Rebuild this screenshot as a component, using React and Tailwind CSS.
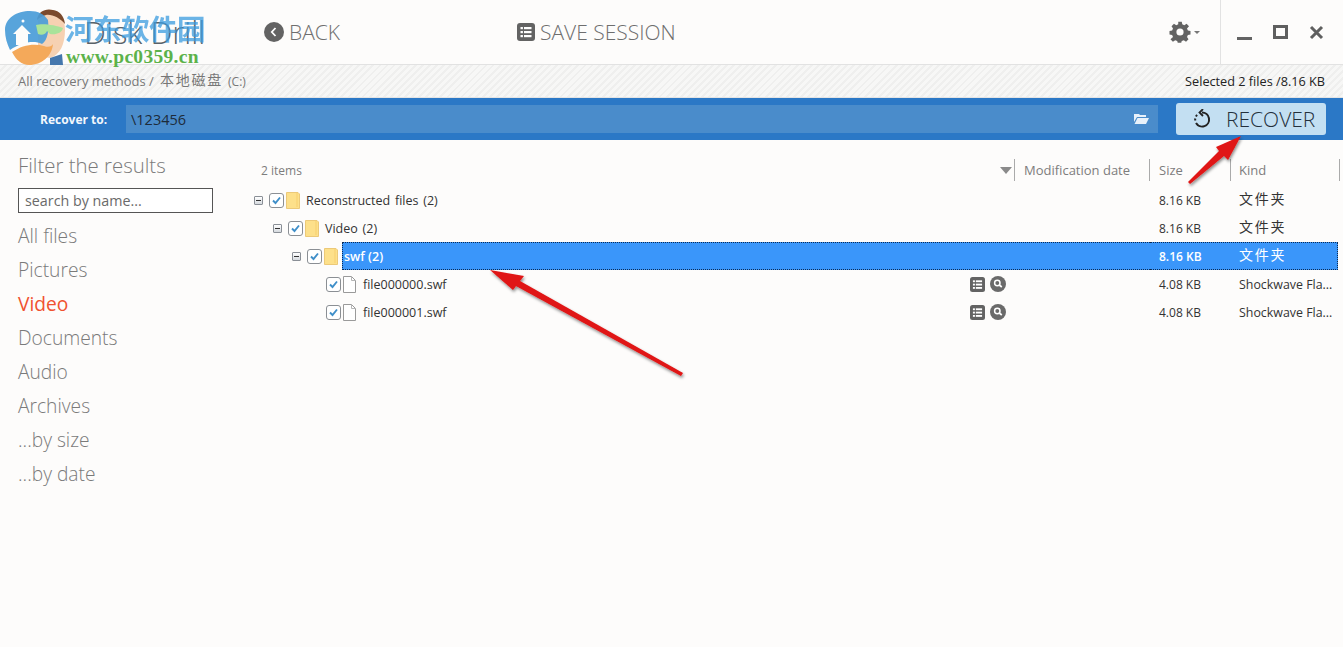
import React from "react";

function Minus() {
  return (
    <span className="w-[9px] h-[9px] border border-[#8a8f96] bg-[linear-gradient(#ffffff,#d5d9de)] flex items-center justify-center shrink-0 rounded-[1px]">
      <span className="w-[5px] h-px bg-[#333]" />
    </span>
  );
}

function Check() {
  return (
    <span className="w-[15px] h-[15px] border border-[#8b8f94] rounded-[3px] bg-white flex items-center justify-center shrink-0">
      <svg width="11" height="11" viewBox="0 0 11 11"><path d="M2 5.5 L4.5 8 L9 2.5" fill="none" stroke="#3f8fc9" strokeWidth="1.9" /></svg>
    </span>
  );
}

function Folder() {
  return (
    <svg width="14" height="17" viewBox="0 0 14 17" className="shrink-0">
      <path d="M0.5 0.5 H12 L13.5 2 V16.5 H0.5 Z" fill="#fde08a" stroke="#ecc978" strokeWidth="1" />
      <path d="M11 1 V15" stroke="#f6cf6e" strokeWidth="1" />
    </svg>
  );
}

function FileIcon() {
  return (
    <svg width="13" height="17" viewBox="0 0 13 17" className="shrink-0">
      <path d="M0.5 0.5 H8.5 L12.5 4.5 V16.5 H0.5 Z" fill="#fff" stroke="#9a9a9a" />
      <path d="M8.5 0.5 V4.5 H12.5" fill="none" stroke="#b5b5b5" />
    </svg>
  );
}

function ListSquare({ size = 15 }) {
  return (
    <svg width={size} height={size} viewBox="0 0 18 18" className="shrink-0">
      <rect width="18" height="18" rx="3" fill="#636363" />
      <g fill="#fff">
        <rect x="3.5" y="4" width="2.4" height="2.2" />
        <rect x="7" y="4" width="7.5" height="2.2" />
        <rect x="3.5" y="8" width="2.4" height="2.2" />
        <rect x="7" y="8" width="7.5" height="2.2" />
        <rect x="3.5" y="12" width="2.4" height="2.2" />
        <rect x="7" y="12" width="7.5" height="2.2" />
      </g>
    </svg>
  );
}

function SearchRound() {
  return (
    <svg width="16" height="16" viewBox="0 0 16 16" className="shrink-0">
      <circle cx="8" cy="8" r="8" fill="#6a6a6a" />
      <circle cx="7.3" cy="7" r="2.7" fill="none" stroke="#fff" strokeWidth="1.5" />
      <path d="M9.3 9 L11.8 11" stroke="#fff" strokeWidth="1.7" />
    </svg>
  );
}

function Row({ indent, minus, folder, name, size, kind, selected, tools }) {
  return (
    <div className={`h-[28px] flex items-center text-[12.5px] ${selected ? "text-white" : "text-[#333]"}`}>
      <div className="flex-1 flex items-center min-w-0 h-full" style={{ paddingLeft: indent }}>
        {minus && <span className="mr-[6px] flex"><Minus /></span>}
        <Check />
        <span className="ml-[2px] flex">{folder ? <Folder /> : <FileIcon />}</span>
        {selected ? (
          <span className="ml-[4px] flex-1 h-[28px] flex items-center pl-px pt-[2px] bg-[#3a96fa] border-y border-l border-dotted border-[#0c2c55] font-semibold">{name}</span>
        ) : (
          <span className={`pt-[2px] [word-spacing:1.5px] ${folder ? "ml-[6px]" : "ml-[7px]"}`}>{name}</span>
        )}
        {tools && (
          <span className="ml-auto mr-[144px] flex items-center gap-[5px]">
            <ListSquare />
            <SearchRound />
          </span>
        )}
      </div>
      <div className={`w-[188px] h-full flex items-center shrink-0 ${selected ? "bg-[#3a96fa] border-y border-r border-dotted border-[#0c2c55]" : ""}`}>
        <span className={`w-[80px] pl-[9px] pt-px text-[12px] ${selected ? "font-semibold" : ""}`}>{size}</span>
        <span className={`pl-[9px] whitespace-nowrap ${kind === "文件夹" ? "text-[14px] tracking-[1.7px] mt-[-3px]" : "pt-[2px] text-[12.4px]"}`}>{kind}</span>
      </div>
    </div>
  );
}

const nav = ["All files", "Pictures", "Video", "Documents", "Audio", "Archives", "...by size", "...by date"];

export default function App() {
  return (
    <div className="relative w-[1343px] h-[647px] overflow-hidden bg-[#fdfcfb] font-['Open_Sans','Noto_Sans_CJK_SC',sans-serif]">
      {/* Header */}
      <header className="h-[65px] flex items-center border-b border-[#e2e2e2] text-[#6e6e6e]">
        <span className="ml-[84px] w-[180px] text-[31px] leading-none font-light text-[#5a6268] pt-px">Disk Drill</span>
        <span className="flex items-center gap-[5px] text-[21px] font-light">
          <svg width="20" height="20" viewBox="0 0 20 20"><circle cx="10" cy="10" r="10" fill="#636363" /><path d="M11.5 6 L7.8 10 L11.5 14" fill="none" stroke="#fff" strokeWidth="1.8" /></svg>
          <span className="pt-[2px]">BACK</span>
        </span>
        <span className="ml-[177px] flex items-center gap-[5px] text-[21px] font-light">
          <ListSquare size={18} />
          <span className="pt-[2px]">SAVE SESSION</span>
        </span>
        <span className="ml-auto flex items-center gap-[2px] mr-[20px]">
          <svg width="24" height="24" viewBox="0 0 24 24" fill="#636363">
            <path fillRule="evenodd" d="M10 1h4l.6 3 2.3 1 2.6-1.7 2.8 2.8L20 8.700l1 2.300 3 .6v4l-3 .6-1 2.300 1.700 2.600-2.800 2.800-2.600-1.700-2.300 1-.6 1.800h-4l-.6-1.800-2.300-1-2.600 1.700-2.800-2.800L4 18.500l-1-2.300-3-.6v-4l3-.6 1-2.300-1.700-2.600 2.800-2.800 2.600 1.700 2.300-1z" transform="translate(1.500 0.800) scale(0.875)" />
            <circle cx="12" cy="12" r="3.600" fill="#fdfcfb" />
          </svg>
          <span className="w-0 h-0 border-x-[3px] border-x-transparent border-t-[3px] border-t-[#777]" />
        </span>
        <span className="w-px h-[65px] bg-[#e2e2e2]" />
        <span className="flex items-center ml-[16px] mr-[19px]">
          <span className="w-[15px] h-[3px] bg-[#636363] mt-[12px]" />
          <span className="ml-[21px] w-[15px] h-[14px] border-[3px] border-[#5f5f5f]" />
          <svg width="15" height="15" viewBox="0 0 15 15" className="ml-[21px]"><path d="M2 2 L13 13 M13 2 L2 13" stroke="#5f5f5f" strokeWidth="3" /></svg>
        </span>
      </header>

      {/* Breadcrumb */}
      <div className="h-[33px] flex items-center justify-between border-b border-[#e4e4e4] pl-[18px] pr-[18px] bg-[repeating-linear-gradient(135deg,#f7f7f6_0px,#f7f7f6_3px,#efefee_3px,#efefee_5px)]">
        <span className="flex items-center text-[13px] text-[#777]">
          <span className="pt-[2px]">All recovery methods /</span>
          <span className="ml-[6px] text-[14px] tracking-[1.8px] mt-[-3px]">本地磁盘</span>
          <span className="ml-[5px] text-[12px] pt-[2px]">(C:)</span>
        </span>
        <span className="text-[12.7px] text-[#222] pt-[2px]">Selected 2 files /8.16 KB</span>
      </div>

      {/* Recover bar */}
      <div className="h-[42px] flex items-center bg-[#2b78c6]">
        <span className="ml-[40px] w-[86px] text-[12px] font-bold text-[#f2f7fc] pt-[2px]">Recover to:</span>
        <div className="w-[1032px] h-[28px] flex items-center justify-between pl-[5px] pr-[9px] bg-[#4a8ccb] text-[14.5px] text-[#1d2b3a]">
          <span className="pt-px">\123456</span>
          <svg width="15" height="12" viewBox="0 0 15 12" fill="#e8f1fa"><path d="M0 2 V1 H5 L6 2 H12 V4 H3 L0 9 Z" /><path d="M3.500 5 H15 L12 11 H0.500 Z" /></svg>
        </div>
        <button className="ml-[18px] w-[150px] h-[32px] flex items-center rounded-[3px] bg-[#c3dff2] text-[#23303c] text-[21px] font-light">
          <svg width="20" height="20" viewBox="0 0 20 20" className="ml-[16px]" fill="none" stroke="#222" strokeWidth="2">
            <path d="M10 3.500 A7 7 0 1 1 4 14" />
            <path d="M3.200 11.500 A7 7 0 0 1 5.500 5.500" strokeDasharray="2 2" />
            <path d="M11 0 L7.500 3.500 L11 7" strokeWidth="1.800" />
          </svg>
          <span className="ml-[14px] pt-[2px]">RECOVER</span>
        </button>
      </div>

      {/* Body */}
      <div className="flex">
        <aside className="w-[245px] shrink-0 pl-[18px] pt-[11px] text-[#7a7a7a]">
          <div className="text-[20.4px] leading-[28px] font-light">Filter the results</div>
          <div className="mt-[9px] w-[195px] h-[25px] border border-[#555] bg-white flex items-center pl-[6px] pt-px text-[14.3px] text-[#6a6a6a]">search by name...</div>
          <nav className="mt-[6px]">
            {nav.map((n) => (
              <div key={n} className={`h-[34px] flex items-center pt-px text-[19.2px] font-light ${n === "Video" ? "text-[#f0522f] font-normal" : ""}`}>{n}</div>
            ))}
          </nav>
        </aside>
        <main className="flex-1 min-w-0 pr-[5px]">
          <div className="h-[46px] flex items-center pt-[14px] text-[13px] text-[#7d7d7d]">
            <span className="ml-[16px] text-[12px] pt-[2px]">2 items</span>
            <span className="ml-auto w-0 h-0 border-x-[6px] border-x-transparent border-t-[7px] border-t-[#8a8a8a]" />
            <span className="ml-[2px] w-px h-[22px] bg-[#aaa]" />
            <span className="w-[134px] pl-[9px] pt-[2px]">Modification date</span>
            <span className="w-px h-[22px] bg-[#aaa]" />
            <span className="w-[80px] pl-[9px] pt-[2px]">Size</span>
            <span className="w-px h-[22px] bg-[#aaa]" />
            <span className="w-[108px] pl-[8px] pt-[2px]">Kind</span>
            <span className="w-px h-[22px] bg-[#aaa] mr-[-2px]" />
          </div>
          <Row indent={9} minus folder name="Reconstructed files (2)" size="8.16 KB" kind="文件夹" />
          <Row indent={28} minus folder name="Video (2)" size="8.16 KB" kind="文件夹" />
          <Row indent={47} minus folder selected name="swf (2)" size="8.16 KB" kind="文件夹" />
          <Row indent={81} name="file000000.swf" size="4.08 KB" kind="Shockwave Fla..." tools />
          <Row indent={81} name="file000001.swf" size="4.08 KB" kind="Shockwave Fla..." tools />
        </main>
      </div>

      {/* Annotation arrows */}
      <svg className="absolute left-0 top-0 pointer-events-none" width="1343" height="647" viewBox="0 0 1343 647">
        <defs>
          <filter id="sh" x="-20%" y="-20%" width="140%" height="140%">
            <feDropShadow dx="1" dy="2" stdDeviation="1.500" floodColor="#000" floodOpacity="0.45" />
          </filter>
        </defs>
        <g fill="#e01414" filter="url(#sh)">
          <path d="M681 376 L516 286 L513 290 L490 270 L524 276 L520 281 L683 373 Z" />
          <path d="M1188 182 L1219 151 L1216 147 L1241 136 L1228 160 L1224 156 L1190 184 Z" />
        </g>
      </svg>

      {/* Watermark */}
      <div className="absolute left-0 top-0 w-[205px] h-[66px] pointer-events-none">
        <svg width="70" height="66" viewBox="0 0 70 66" className="absolute left-0 top-0">
          <path d="M38 20 C40 12 46 9 52 10 C60 11 65 18 65 30 C65 44 60 55 50 58 L38 56 Z" fill="#f4c9a4" opacity="0.85" />
          <path d="M37 20 C38 11 46 8 53 10 C59 11 64 15 65 24 C60 18 52 14 46 15 C42 16 39 18 37 20 Z" fill="#7b4a2c" />
          <path d="M5 30 C5 18 17 11 30 11 C38 11 44 14 48 20 C49 30 48 40 42 44 C34 40 22 42 10 50 C7 44 5 37 5 30 Z" fill="#4a9cd8" opacity="0.92" />
          <path d="M22 25 L13 34 H16 V45 H28 V34 H31 Z" fill="#fdfcfb" />
          <circle cx="23" cy="21" r="1.500" fill="#fdfcfb" />
          <path d="M12 52 C22 45 34 43 44 46 C49 48 52 46 53 44 C52 56 42 65 29 65 C22 65 16 60 12 52 Z" fill="#f4a95a" />
          <path d="M36 25 C42 23 56 25 63 28 C62 33 56 35 50 34 L47 31 C46 34 42 36 38 34 Z" fill="#a9e39a" />
          <path d="M50 58 L62 54 L63 65 L50 65 Z" fill="#4577ad" />
        </svg>
        <span className="absolute left-[65px] top-[10px] text-[28.5px] leading-[36px] font-bold text-[#3b9ce0] opacity-75 tracking-[-0.5px] font-['Noto_Sans_CJK_SC',sans-serif]">河东软件园</span>
        <span className="absolute left-[66px] top-[47px] text-[19.5px] leading-[20px] font-bold text-[#5cb24a] font-['Liberation_Serif',serif] tracking-[0.3px]">www.pc0359.cn</span>
      </div>
    </div>
  );
}
